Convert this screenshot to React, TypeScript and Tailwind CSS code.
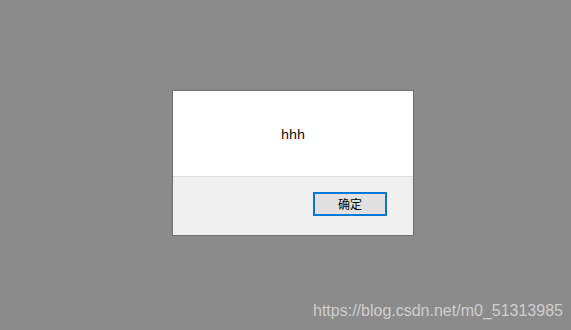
export default function App() {
  return (
    <div className="relative w-[571px] h-[330px] bg-[#8b8b8b] overflow-hidden" style={{ fontFamily: '"Noto Sans", "Noto Sans CJK SC", sans-serif' }}>
      <div className="pt-[90px] pl-[172px]">
        <div className="w-[242px] h-[146px] border border-[#707070] bg-white flex flex-col">
          <div className="h-[85px] flex items-center justify-center pt-[2px] text-[13px] text-black">hhh</div>
          <div className="h-px bg-[#dfdfdf]" />
          <div className="flex-1 bg-[#f0f0f0] flex justify-end items-start pt-[15px] pr-[26px]">
            <button className="w-[74px] h-[24px] border-2 border-[#0078d7] bg-[#e1e1e1] text-[12px] text-black leading-none flex items-center justify-center" style={{ fontFamily: '"Noto Sans CJK SC", sans-serif' }}>
              确定
            </button>
          </div>
        </div>
      </div>
      <div className="absolute left-[313px] top-[299px] text-[16px] text-[#cfcfcf]" style={{ fontFamily: '"Liberation Sans", Arial, sans-serif' }}>
        https://blog.csdn.net/m0_51313985
      </div>
    </div>
  );
}
